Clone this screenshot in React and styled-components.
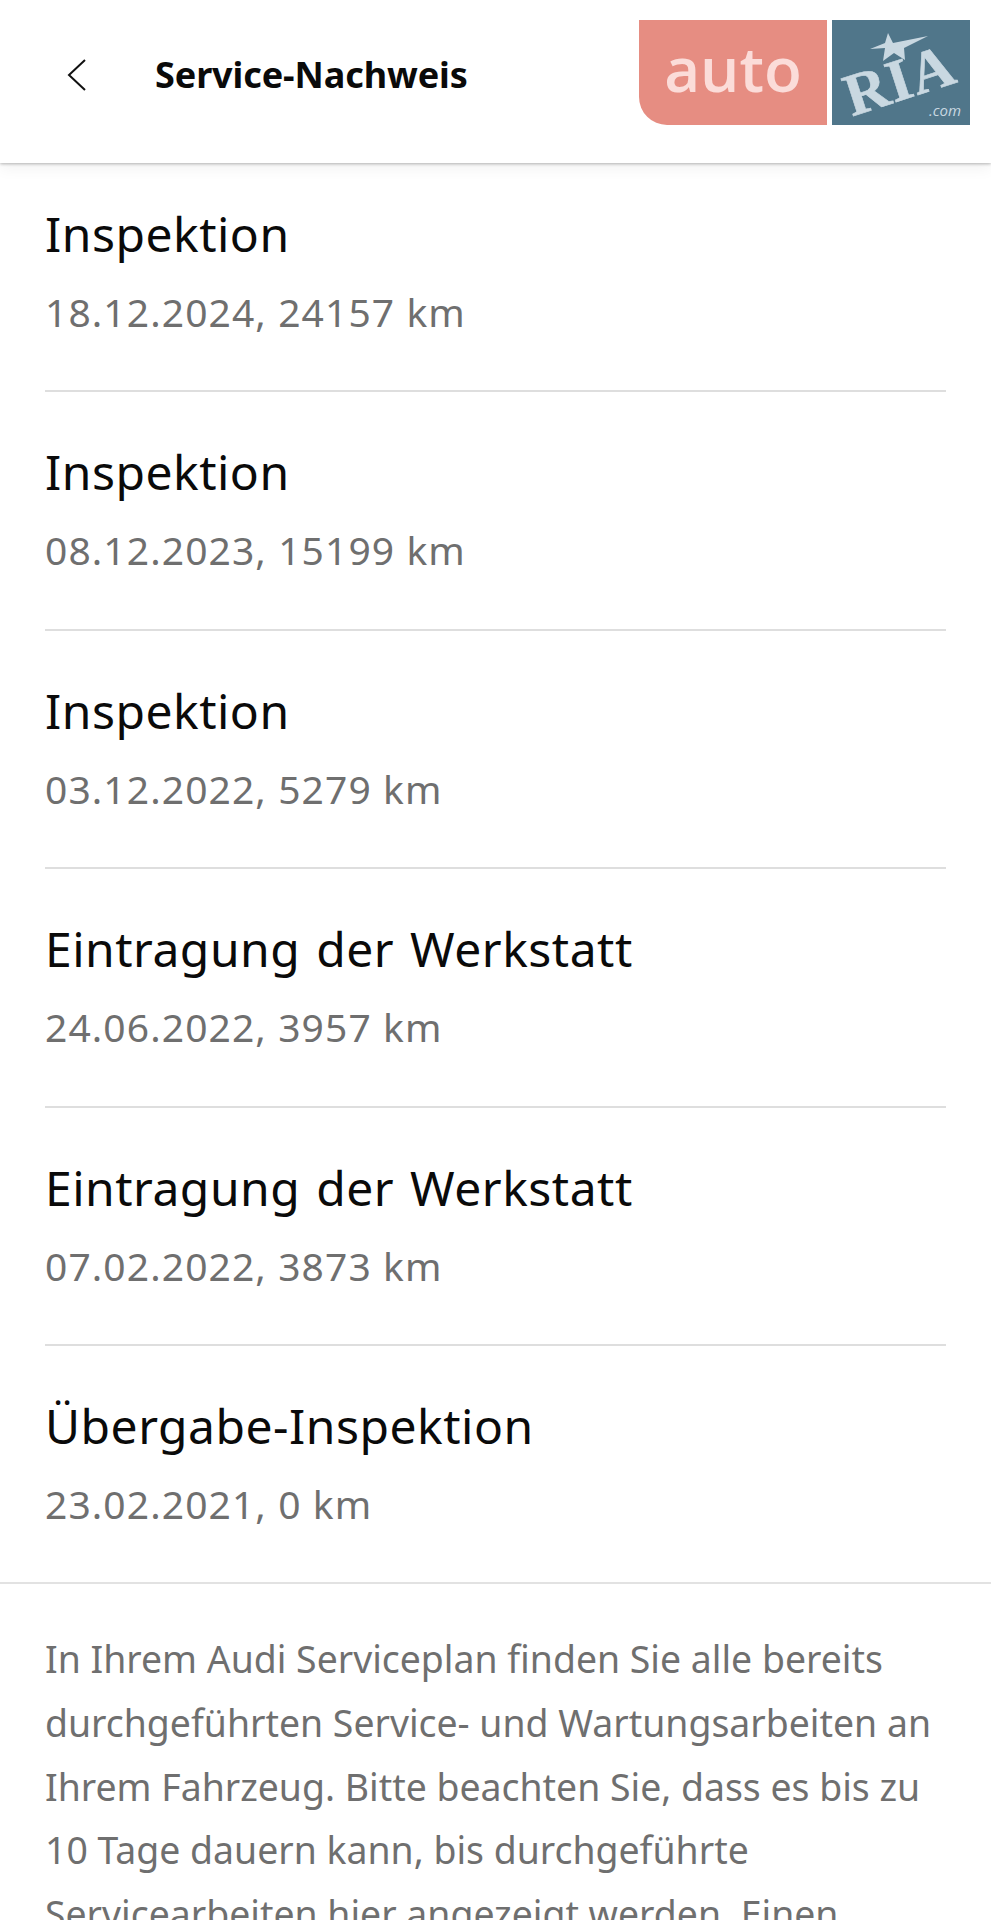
import React from "react";
import styled, { createGlobalStyle } from "styled-components";

const Global = createGlobalStyle`
  html, body { margin: 0; padding: 0; background: #fff; }
  body { font-family: "Noto Sans", "Open Sans", sans-serif; }
`;

const Page = styled.div`
  position: relative;
  width: 991px;
  height: 1920px;
  overflow: hidden;
  background: #fff;
`;

const Header = styled.header`
  display: flex;
  align-items: center;
  height: 163px;
  padding-bottom: 14px;
  box-sizing: border-box;
  background: #fff;
  box-shadow: 0 1px 3px rgba(0, 0, 0, 0.28), 0 6px 14px rgba(0, 0, 0, 0.05);
`;

const BackButton = styled.button`
  display: flex;
  align-items: center;
  width: 155px;
  height: 80px;
  padding: 0 0 0 66px;
  border: 0;
  background: none;
  box-sizing: border-box;
`;

const Title = styled.h1`
  margin: 0;
  font-size: 36px;
  line-height: 48px;
  font-weight: 700;
  color: #0a0a0a;
  letter-spacing: -0.1px;
`;

const Logo = styled.div`
  position: absolute;
  top: 20px;
  left: 639px;
  display: flex;
  gap: 5px;
  height: 105px;
`;

const LogoAuto = styled.div`
  display: flex;
  align-items: center;
  justify-content: center;
  width: 188px;
  padding: 0 0 10px;
  box-sizing: border-box;
  background: #e68d82;
  border-bottom-left-radius: 28px;
  color: #fbdcd9;
  font-family: "Open Sans", sans-serif;
  font-size: 62px;
  font-weight: 600;
  line-height: 1;
`;

const LogoRia = styled.div`
  position: relative;
  width: 138px;
  background: #50768a;
  color: #c9d8e1;
  overflow: hidden;
`;

const RiaWord = styled.span`
  position: absolute;
  left: 11px;
  top: 30px;
  font-family: "Liberation Serif", serif;
  font-size: 60px;
  font-weight: 700;
  line-height: 1;
  letter-spacing: 1px;
  -webkit-text-stroke: 0.6px #c9d8e1;
  transform: rotate(-18deg);
`;

const RiaStar = styled.svg`
  position: absolute;
  left: 38px;
  top: 13px;
`;

const RiaCom = styled.span`
  position: absolute;
  right: 9px;
  bottom: 6px;
  font-family: "Open Sans", sans-serif;
  font-size: 15px;
  font-style: italic;
  line-height: 1.2;
`;

const List = styled.ul`
  margin: 0;
  padding: 0;
  list-style: none;
  border-bottom: 2px solid #e2e2e2;
`;

const Item = styled.li`
  height: 238.6px;
  margin: 0 45px;
  box-sizing: border-box;
  border-bottom: 2px solid #dedede;
  &:first-child { height: 229px; }
  &:last-child { height: 236px; border-bottom: 0; }
`;

const ItemTitle = styled.div`
  padding-top: ${(p) => (p.$first ? "38px" : "47px")};
  font-size: 48px;
  line-height: 66px;
  letter-spacing: 0.5px;
  word-spacing: 3px;
  color: #0a0a0a;
`;

const ItemMeta = styled.div`
  margin-top: 19px;
  font-size: 39px;
  line-height: 52px;
  letter-spacing: 1.1px;
  color: #6f6f6f;
`;

const Note = styled.p`
  margin: 0;
  padding: 43px 30px 0 45px;
  font-size: 37.4px;
  line-height: 63.7px;
  color: #6f6f6f;
`;

const rows = [
  ["Inspektion", "18.12.2024, 24157 km"],
  ["Inspektion", "08.12.2023, 15199 km"],
  ["Inspektion", "03.12.2022, 5279 km"],
  ["Eintragung der Werkstatt", "24.06.2022, 3957 km"],
  ["Eintragung der Werkstatt", "07.02.2022, 3873 km"],
  ["Übergabe-Inspektion", "23.02.2021, 0 km"],
];

export default function App() {
  return (
    <Page>
      <Global />
      <Header>
        <BackButton aria-label="Zurück">
          <svg width="22" height="34" viewBox="0 0 22 34" fill="none">
            <path d="M19 2 L3 17 L19 32" stroke="#111" strokeWidth="2" />
          </svg>
        </BackButton>
        <Title>Service-Nachweis</Title>
      </Header>
      <List>
        {rows.map(([t, m], i) => (
          <Item key={i}>
            <ItemTitle $first={i === 0}>{t}</ItemTitle>
            <ItemMeta>{m}</ItemMeta>
          </Item>
        ))}
      </List>
      <Note>
        In Ihrem Audi Serviceplan finden Sie alle bereits durchgeführten
        Service- und Wartungsarbeiten an Ihrem Fahrzeug. Bitte beachten Sie,
        dass es bis zu 10 Tage dauern kann, bis durchgeführte Servicearbeiten
        hier angezeigt werden. Einen
      </Note>
      <Logo>
        <LogoAuto>auto</LogoAuto>
        <LogoRia>
          <RiaStar width="58" height="28" viewBox="0 0 58 28">
            <path d="M18 0 L23 10 L58 3 L34 15 L35 27 L24 20 L13 28 L15 15 L0 16 L15 10 Z" fill="#c9d8e1" />
          </RiaStar>
          <RiaWord>RIA</RiaWord>
          <RiaCom>.com</RiaCom>
        </LogoRia>
      </Logo>
    </Page>
  );
}
